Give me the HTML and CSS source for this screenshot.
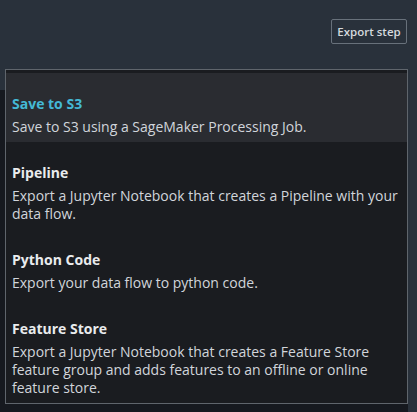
FILE: index.html
```html
<!DOCTYPE html>
<html lang="en">
<head>
<meta charset="utf-8">
<title>Export step</title>
<link rel="stylesheet" href="styles.css">
</head>
<body>
<div class="page">
  <header class="toolbar">
    <button class="btn" type="button">Export step</button>
  </header>
  <main class="panel"></main>
  <ul class="menu" role="menu">
    <li class="item active" role="menuitem">
      <div class="title">Save to S3</div>
      <div class="desc">Save to S3 using a SageMaker Processing Job.</div>
    </li>
    <li class="item" role="menuitem">
      <div class="title">Pipeline</div>
      <div class="desc">Export a Jupyter Notebook that creates a Pipeline with your data flow.</div>
    </li>
    <li class="item" role="menuitem">
      <div class="title">Python Code</div>
      <div class="desc">Export your data flow to python code.</div>
    </li>
    <li class="item" role="menuitem">
      <div class="title">Feature Store</div>
      <div class="desc">Export a Jupyter Notebook that creates a Feature Store feature group and adds features to an offline or online feature store.</div>
    </li>
  </ul>
</div>
</body>
</html>
```

FILE: styles.css
```css
* { box-sizing: border-box; }
html, body {
  margin: 0;
  padding: 0;
  height: 100%;
}
body {
  background: #29313b;
  font-family: "Open Sans", "Noto Sans", sans-serif;
  color: #d1d5db;
  overflow: hidden;
}
.page {
  position: relative;
  height: 412px;
  display: flex;
  flex-direction: column;
}
.toolbar {
  height: 90px;
  display: flex;
  justify-content: flex-end;
  align-items: flex-start;
  padding: 19px 10px 0 0;
}
.btn {
  height: 25px;
  width: 76px;
  padding: 0;
  background: transparent;
  border: 1px solid #68717b;
  border-radius: 2px;
  color: #d5d9de;
  font-family: inherit;
  font-size: 11.5px;
  font-weight: 600;
  line-height: 23px;
}
.panel {
  flex: 1;
  width: 408px;
  background: #16191f;
}
.menu {
  position: absolute;
  top: 69px;
  left: 5px;
  width: 403px;
  height: 335px;
  margin: 0;
  padding: 3px 0 0;
  list-style: none;
  background: #1a1c20;
  border: 1px solid #5f656c;
}
.item {
  padding: 22px 6px 6px;
}
.item.active {
  background: #2a2c31;
}
.title {
  font-size: 14px;
  font-weight: 700;
  line-height: 18px;
  color: #e9ebed;
}
.item.active .title {
  color: #44b9d6;
}
.desc {
  margin-top: 5px;
  font-size: 14px;
  line-height: 18px;
  color: #d1d5db;
}
```
